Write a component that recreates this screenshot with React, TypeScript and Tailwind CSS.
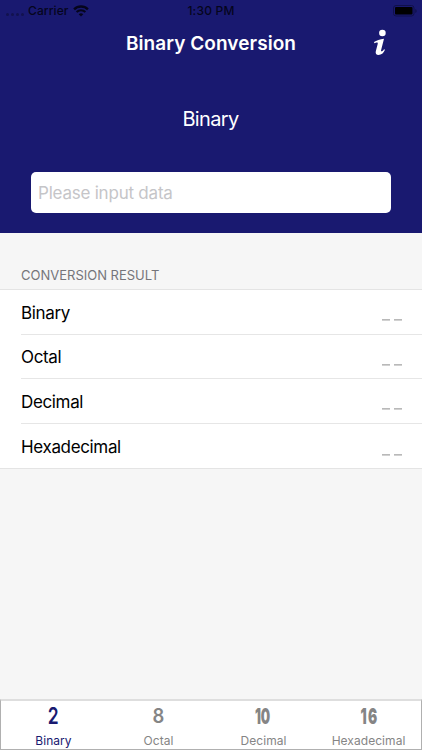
import { useState } from "react";

type Base = {
  name: string;
  radix: number;
  digits: string;
  glyph: string;
};

const BASES: Base[] = [
  {
    name: "Binary",
    radix: 2,
    digits: "01",
    glyph: "text-[23px] font-semibold scale-x-[0.76]",
  },
  {
    name: "Octal",
    radix: 8,
    digits: "01234567",
    glyph: "text-[20px] font-semibold scale-x-[0.92]",
  },
  {
    name: "Decimal",
    radix: 10,
    digits: "0123456789",
    glyph: "text-[22px] font-black tracking-[-0.3px] scale-x-[0.6] -translate-x-px",
  },
  {
    name: "Hexadecimal",
    radix: 16,
    digits: "0123456789abcdef",
    glyph: "text-[22px] font-black tracking-[2px] scale-x-[0.62] translate-x-px",
  },
];

export default function App() {
  const [active, setActive] = useState(0);
  const [value, setValue] = useState("");
  const base = BASES[active];

  // Nothing is shown until the whole input is valid in the selected base.
  const term = value.trim().toLowerCase();
  const valid = term.length > 0 && [...term].every((c) => base.digits.includes(c));
  const parsed = valid ? parseInt(term, base.radix) : null;

  return (
    <div className="flex h-[750px] w-[422px] flex-col overflow-hidden bg-[#f6f6f6] font-['Inter',sans-serif] text-black">
      <header className="h-[233px] shrink-0 bg-[#191970]">
        <StatusBar />
        <div className="grid h-[44px] grid-cols-[84px_1fr_84px] items-center">
          <h1 className="col-start-2 text-center text-[19px] font-semibold leading-6 tracking-[0.07px] whitespace-nowrap text-white">
            Binary Conversion
          </h1>
          <button type="button" aria-label="About" className="flex justify-center pb-[3px]">
            <InfoIcon />
          </button>
        </div>
        <p className="mt-[41px] pr-px text-center text-[20px] leading-6 tracking-[-0.65px] text-white">
          {base.name}
        </p>
        <input
          value={value}
          onChange={(e) => setValue(e.target.value)}
          placeholder="Please input data"
          className="mx-[31px] mt-[41px] block h-[41px] w-[360px] rounded-[5px] bg-white px-[7px] text-[17px] tracking-[-0.22px] outline-none placeholder:text-[#c5c5c8]"
        />
      </header>

      <main className="flex-1">
        <h2 className="h-[56px] pt-[34px] pl-[21px] text-[13px] leading-4 text-[#75757a]">
          CONVERSION RESULT
        </h2>
        <div className="border-y border-[#e4e4e4] bg-white">
          {BASES.map((b, i) => (
            <Row
              key={b.radix}
              name={b.name}
              last={i === BASES.length - 1}
              result={parsed === null ? null : parsed.toString(b.radix).toUpperCase()}
            />
          ))}
        </div>
      </main>

      <nav className="grid h-[51px] shrink-0 grid-cols-4 border border-t-2 border-[#b0b0b0] border-t-[#dedede] bg-white">
        {BASES.map((b, i) => (
          <button
            key={b.radix}
            type="button"
            onClick={() => setActive(i)}
            className={`flex flex-col items-center ${i === active ? "text-[#191970]" : "text-[#858585]"}`}
          >
            <span className={`mt-[3px] block h-6 leading-6 ${b.glyph}`}>{b.radix}</span>
            <span className="mt-[5px] text-[12px] leading-4 tracking-[0.05px]">{b.name}</span>
          </button>
        ))}
      </nav>
    </div>
  );
}

function StatusBar() {
  return (
    <div className="grid h-[22px] grid-cols-3 items-center text-[12px] font-medium leading-4 text-[#05051c]">
      <div className="flex items-center pl-[6px]">
        <span className="flex w-[22px] gap-[2px] pt-[6px]">
          {[0, 1, 2, 3].map((n) => (
            <i key={n} className="size-[3px] rounded-full bg-[#12124f]" />
          ))}
        </span>
        <span className="tracking-[0.1px]">Carrier</span>
        <WifiIcon />
      </div>
      <span className="text-center tracking-[0.2px]">1:30 PM</span>
      <BatteryIcon />
    </div>
  );
}

function Row({ name, result, last }: { name: string; result: string | null; last: boolean }) {
  return (
    <div className="flex h-[44.6px] pl-[21px]">
      <div
        className={`flex flex-1 items-center justify-between pr-5 text-[17px] leading-6 ${last ? "" : "border-b border-[#e6e6e6]"}`}
      >
        <span className="pt-[2px] tracking-[-0.35px]">{name}</span>
        {result === null ? (
          <svg viewBox="0 0 20 2" className="mt-[17px] h-[2px] w-5" fill="#a3a3a3">
            <path d="M0 .2h8v1.4H0ZM12 .2h8v1.4h-8Z" />
          </svg>
        ) : (
          <span className="text-[#8e8e93]">{result}</span>
        )}
      </div>
    </div>
  );
}

function WifiIcon() {
  return (
    <svg viewBox="0 0 16 12" className="ml-[4px] h-[12px] w-[16px]" fill="none" stroke="currentColor">
      <path d="M1.1 4.4a9.8 9.8 0 0 1 13.8 0" strokeWidth="2.4" />
      <path d="M3.6 7a6.2 6.2 0 0 1 8.8 0" strokeWidth="2" />
      <path d="M8 11.6 5.7 9.3a3.3 3.3 0 0 1 4.6 0Z" fill="currentColor" stroke="none" />
    </svg>
  );
}

function BatteryIcon() {
  return (
    <svg viewBox="0 0 25 12" className="mr-[4px] mb-px h-[12px] w-[25px] justify-self-end">
      <rect x="0.5" y="0.5" width="20.5" height="10.5" rx="2.5" fill="none" stroke="#10104a" />
      <rect x="2" y="2" width="17.5" height="7.5" rx="1" fill="#000" />
      <path d="M22.3 4v4c.8-.3 1.3-1.1 1.3-2s-.5-1.7-1.3-2Z" fill="#10104a" />
    </svg>
  );
}

function InfoIcon() {
  return (
    <svg viewBox="0 0 14 27" className="h-[27px] w-[14px]" fill="#fff">
      <circle cx="9.4" cy="4" r="3.3" />
      <path d="M1 13C3.5 11.5 6.8 10.3 11 9.8L8.2 20.8C7.9 22 8 22.3 8.5 22.3C9.3 22.3 10.2 21.5 11 20.2L12 20.8C10.5 24.2 8.3 26 5.6 26C3.2 26 2.3 24.5 2.8 22.2L4.7 14.9C5 13.5 4.4 13.3 3.4 13.5L1.4 14.2Z" />
    </svg>
  );
}
